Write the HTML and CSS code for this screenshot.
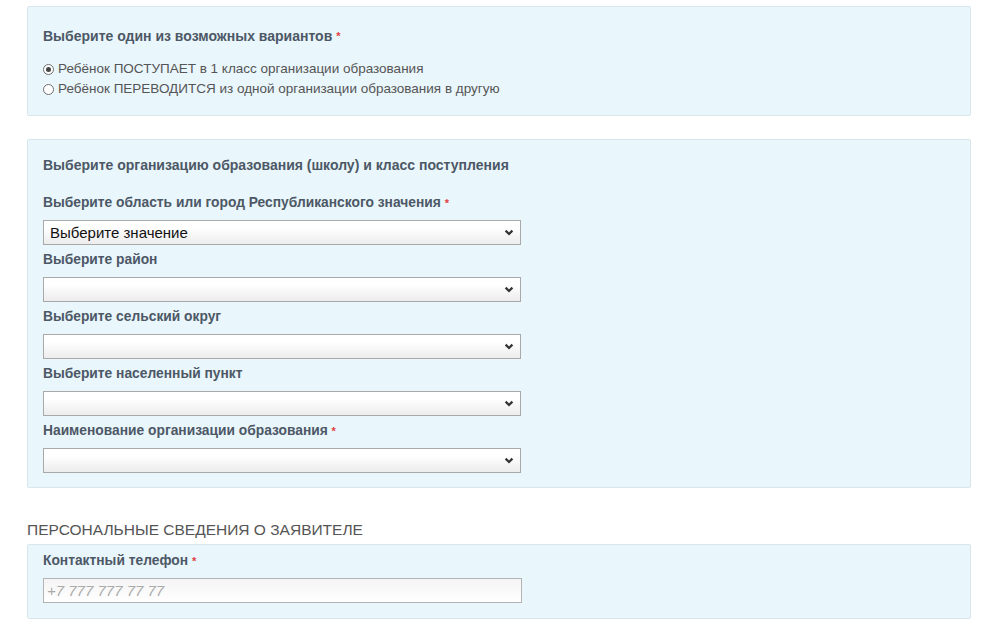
FILE: index.html
```html
<!DOCTYPE html>
<html lang="ru">
<head>
<meta charset="utf-8">
<title>Форма</title>
<link rel="stylesheet" href="styles.css">
</head>
<body>
<div class="page">
  <section class="panel panel-choice">
    <h3 class="panel-title">Выберите один из возможных вариантов <span class="req">*</span></h3>
    <div class="radios">
      <label class="radio"><input type="radio" name="type" checked> Ребёнок ПОСТУПАЕТ в 1 класс организации образования</label>
      <label class="radio"><input type="radio" name="type"> Ребёнок ПЕРЕВОДИТСЯ из одной организации образования в другую</label>
    </div>
  </section>

  <section class="panel panel-school">
    <h3 class="panel-title">Выберите организацию образования (школу) и класс поступления</h3>
    <div class="field">
      <label class="field-label">Выберите область или город Республиканского значения <span class="req">*</span></label>
      <select class="select"><option>Выберите значение</option></select>
    </div>
    <div class="field">
      <label class="field-label">Выберите район</label>
      <select class="select"><option></option></select>
    </div>
    <div class="field">
      <label class="field-label">Выберите сельский округ</label>
      <select class="select"><option></option></select>
    </div>
    <div class="field">
      <label class="field-label">Выберите населенный пункт</label>
      <select class="select"><option></option></select>
    </div>
    <div class="field">
      <label class="field-label">Наименование организации образования <span class="req">*</span></label>
      <select class="select"><option></option></select>
    </div>
  </section>

  <h2 class="section-title">ПЕРСОНАЛЬНЫЕ СВЕДЕНИЯ О ЗАЯВИТЕЛЕ</h2>
  <section class="panel panel-contact">
    <div class="field">
      <label class="field-label">Контактный телефон <span class="req">*</span></label>
      <input class="input" type="text" placeholder="+7 777 777 77 77">
    </div>
  </section>
</div>
</body>
</html>
```

FILE: styles.css
```css
html, body {
  margin: 0;
  padding: 0;
  background: #ffffff;
}

body {
  font-family: "Liberation Sans", Arial, sans-serif;
  color: #555;
}

.page {
  width: 944px;
  margin: 0 0 0 27px;
  padding-top: 6px;
}

.panel {
  background: #e9f6fc;
  border: 1px solid #d8e6ec;
  border-radius: 2px;
  padding: 0 15px;
  box-sizing: border-box;
}

.panel-title {
  margin: 0;
  font-size: 14px;
  line-height: 18px;
  font-weight: bold;
  color: #4d5866;
}

.req {
  color: #e0403f;
  font-weight: bold;
  font-size: 11px;
  vertical-align: top;
}

.panel-choice {
  padding-top: 20px;
  padding-bottom: 16px;
}

.radios {
  margin-top: 14px;
  display: flex;
  flex-direction: column;
}

.radio {
  display: flex;
  align-items: center;
  font-size: 13.5px;
  line-height: 20px;
  color: #555;
  gap: 4px;
}

.radio input {
  appearance: none;
  -webkit-appearance: none;
  margin: 0;
  width: 11px;
  height: 11px;
  border: 1px solid #6e6e6e;
  border-radius: 50%;
  background: #fff;
  box-sizing: border-box;
  display: grid;
  place-items: center;
}

.radio input:checked::after {
  content: "";
  width: 5px;
  height: 5px;
  border-radius: 50%;
  background: #444;
}

.panel-school {
  margin-top: 23px;
  padding-top: 16px;
  padding-bottom: 14px;
}

.panel-school .panel-title {
  margin-bottom: 20px;
}

.field {
  display: flex;
  flex-direction: column;
  align-items: flex-start;
}

.field + .field {
  margin-top: 6px;
}

.field-label {
  font-size: 13.8px;
  line-height: 18px;
  font-weight: bold;
  color: #4d5866;
  margin-bottom: 8px;
}

.select {
  appearance: none;
  -webkit-appearance: none;
  width: 478px;
  height: 25px;
  margin: 0;
  padding: 0 24px 0 6px;
  border: 1px solid #a9a9a9;
  border-radius: 0;
  font-family: "Liberation Sans", Arial, sans-serif;
  font-size: 15px;
  color: #111;
  background-color: #fff;
  background-image:
    url("data:image/svg+xml;utf8,<svg xmlns='http://www.w3.org/2000/svg' width='10' height='7' viewBox='0 0 10 7'><path d='M1.6 1.6 L5 5 L8.4 1.6' fill='none' stroke='%23333' stroke-width='2.2'/></svg>"),
    linear-gradient(#ffffff, #ffffff 30%, #ececec);
  background-repeat: no-repeat, no-repeat;
  background-position: right 6px center, 0 0;
  background-size: 10px 7px, 100% 100%;
  box-sizing: border-box;
}

.section-title {
  margin: 32px 0 0 0;
  font-size: 15.5px;
  line-height: 20px;
  font-weight: normal;
  color: #555;
}

.panel-contact {
  margin-top: 4px;
  padding-top: 7px;
  padding-bottom: 15px;
}

.input {
  width: 479px;
  height: 25px;
  margin: 0;
  padding: 0 3px;
  border: 1px solid #b4b4b4;
  border-radius: 0;
  box-sizing: border-box;
  font-family: "Liberation Sans", Arial, sans-serif;
  font-size: 15px;
  font-style: italic;
  background: linear-gradient(#f4f4f4, #ffffff);
}

.input::placeholder {
  color: #aaa;
  font-style: italic;
}
```
